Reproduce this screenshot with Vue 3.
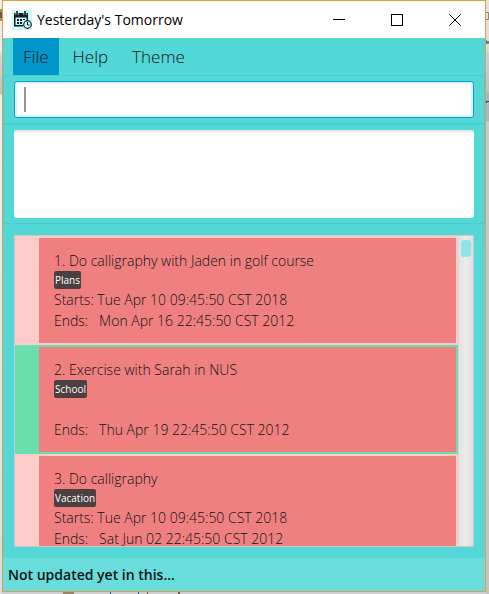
<script setup>
import { ref } from 'vue'

const command = ref('')
const result = ref('')
const menus = ['File', 'Help', 'Theme']
const activeMenu = ref('File')
const selected = ref(2)
const tasks = [
  { id: 1, name: 'Do calligraphy with Jaden in golf course', tag: 'Plans', start: 'Tue Apr 10 09:45:50 CST 2018', end: 'Mon Apr 16 22:45:50 CST 2012' },
  { id: 2, name: 'Exercise with Sarah in NUS', tag: 'School', start: '', end: 'Thu Apr 19 22:45:50 CST 2012' },
  { id: 3, name: 'Do calligraphy', tag: 'Vacation', start: 'Tue Apr 10 09:45:50 CST 2018', end: 'Sat Jun 02 22:45:50 CST 2012' },
]
</script>

<template>
  <div class="desktop">
    <svg class="behind left" viewBox="0 0 2 30" aria-hidden="true">
      <path d="M0 9h2v3H0zM0 18h2v3H0z" fill="#c08a4a" />
      <path d="M0 12h2v6H0z" fill="#6b5a56" />
    </svg>
    <svg class="behind right" viewBox="0 0 3 110" aria-hidden="true">
      <path d="M0 12.500h2.500v7H0" fill="none" stroke="#8a8484" />
      <path d="M0 40l1 4 1-3 1 3" fill="none" stroke="#5a6a90" />
      <path d="M0 101h3v1H1v1H0z" fill="#444" />
    </svg>
    <svg class="behind bottom" viewBox="0 0 200 2" aria-hidden="true">
      <path d="M63 0h11v2H63z" fill="#9c8266" />
      <path d="M110 0h1v2h-1zM138 0h1v2h-1z" fill="#1c5c94" />
      <path d="M147 0h1v2h-1zM178 0h2v2h-2z" fill="#7a5a3c" />
    </svg>

    <div class="window">
      <header class="titlebar">
        <svg class="logo" viewBox="0 0 20 20" aria-hidden="true">
          <rect width="20" height="20" fill="#c8fbfa" />
          <path d="M2 3h14v7h-1.500V7.500h-11V15H11v1.500H2z" fill="#151c1c" />
          <path d="M5 1v4M13 1v4" stroke="#c8fbfa" stroke-width="3" />
          <path d="M5 1v4M13 1v4" stroke="#151c1c" stroke-width="1.600" />
          <path d="M5 9h2v2H5zM8 9h2v2H8zM11 9h2v1h-2zM5 12h2v2H5zM8 12h2v2H8z" fill="#151c1c" />
          <circle cx="15.500" cy="14.500" r="4.800" fill="#c8fbfa" />
          <circle cx="15.500" cy="14.500" r="3.800" fill="none" stroke="#151c1c" stroke-width="1.200" />
          <path d="M15.500 12v3h2" fill="none" stroke="#151c1c" />
        </svg>
        <h1 class="title">Yesterday's Tomorrow</h1>
        <div class="controls">
          <button type="button" aria-label="Minimize">
            <svg viewBox="0 0 12 12"><path d="M0 5.500h12" /></svg>
          </button>
          <button type="button" aria-label="Maximize">
            <svg viewBox="0 0 12 12"><path d="M.5.5h11v11H.5z" /></svg>
          </button>
          <button type="button" aria-label="Close">
            <svg viewBox="0 0 12 12" class="smooth"><path d="M.3.3l11.400 11.400M11.700.3L.3 11.700" /></svg>
          </button>
        </div>
      </header>

      <nav class="menubar">
        <button
          v-for="menu in menus"
          :key="menu"
          type="button"
          class="menu"
          :class="{ active: menu === activeMenu }"
          @click="activeMenu = menu"
        >{{ menu }}</button>
      </nav>

      <div class="pane">
        <div class="command">
          <span class="caret"></span>
          <input v-model="command" type="text" aria-label="Command" />
        </div>
      </div>

      <div class="pane">
        <textarea v-model="result" class="result" aria-label="Result" readonly></textarea>
      </div>

      <main class="list-pane">
        <div class="list">
          <ul class="rows">
            <li
              v-for="task in tasks"
              :key="task.id"
              class="row"
              :class="{ selected: task.id === selected }"
              @click="selected = task.id"
            >
              <article class="card">
                <h2 class="name">{{ task.id }}. {{ task.name }}</h2>
                <span class="tag">{{ task.tag }}</span>
                <p class="date"><template v-if="task.start">Starts: {{ task.start }}</template></p>
                <p class="date">Ends:&nbsp;&nbsp; {{ task.end }}</p>
              </article>
            </li>
          </ul>
          <div class="track"><div class="thumb"></div></div>
        </div>
      </main>

      <footer class="status">Not updated yet in this...</footer>
    </div>
  </div>
</template>

<style>
body {
  margin: 0;
}
</style>

<style scoped>
.desktop {
  position: relative;
  box-sizing: border-box;
  height: 100vh;
  padding: 0 3px 2px 2px;
  background:
    linear-gradient(#ececec 0, #ececec 52px, #d8d8dc 53px, #bcbcc2 94px, #f0f0f0 95px, #dcdcdc 100%) left / 2px 100% no-repeat,
    linear-gradient(#e2e2e2 0, #dcdcdc 52px, #cfcfdb 53px, #bfbfcc 92px, #aab4c4 93px, #aab4c4 121px, #cacaca 122px, #c4c4c4 100%) right / 3px 100% no-repeat,
    #cfcfcf;
  font-family: "Open Sans", "Noto Sans", sans-serif;
  color: #0c1414;
}
.behind {
  position: absolute;
}
.left {
  top: 0;
  left: 0;
  width: 2px;
  height: 30px;
}
.right {
  top: 0;
  right: 0;
  width: 3px;
  height: 110px;
}
.bottom {
  bottom: 0;
  left: 0;
  width: 200px;
  height: 2px;
}
.window {
  box-sizing: border-box;
  height: 100%;
  display: flex;
  flex-direction: column;
  border: 1px solid #dda047;
  background: #54d7d7;
}
button,
input,
textarea {
  font: inherit;
  color: inherit;
  border: 0;
  margin: 0;
  padding: 0;
  background: none;
  outline: none;
}
.titlebar {
  display: flex;
  align-items: center;
  height: 37px;
  flex: none;
  padding-left: 9px;
  background: #fff;
}
.logo {
  width: 20px;
  height: 20px;
}
.title {
  flex: 1;
  margin: 0 0 0 5px;
  font-size: 14px;
  font-weight: 400;
  color: #000;
  white-space: nowrap;
}
.controls {
  display: flex;
  gap: 12px;
  padding-right: 7px;
}
.controls button {
  display: flex;
  align-items: center;
  justify-content: center;
  width: 46px;
  height: 36px;
}
.controls svg {
  width: 12px;
  height: 12px;
  fill: none;
  stroke: #000;
  shape-rendering: crispEdges;
}
.controls .smooth {
  shape-rendering: auto;
}
.menubar {
  display: flex;
  flex: none;
  gap: 4px;
  height: 37px;
  padding-left: 10px;
}
.menu {
  padding: 0 10px;
  font-size: 17px;
  font-weight: 300;
}
.menu.active {
  background: #0096c9;
}
.pane {
  flex: none;
  padding: 5px 10px;
  border: 1px solid #46cfcf;
}
.command {
  display: flex;
  align-items: center;
  box-sizing: border-box;
  height: 37px;
  padding-left: 9px;
  border: 1px solid #039ed3;
  border-radius: 3px;
  background: #fff;
  box-shadow: inset 0 0 0 2px #def1f9;
}
.caret {
  width: 2px;
  height: 25px;
  background: #969696;
}
.command input {
  flex: 1;
  min-width: 0;
  font-size: 17px;
}
.result {
  display: block;
  box-sizing: border-box;
  width: 100%;
  height: 88px;
  border-radius: 3px;
  background: #fff;
  box-shadow: inset 0 3px 3px -1px #e4e4e4;
  resize: none;
}
.list-pane {
  flex: 1;
  min-height: 0;
  display: flex;
  padding: 11px;
}
.list {
  flex: 1;
  min-width: 0;
  display: flex;
  border: 1px solid #c8c8c8;
  background: #ffcccc;
}
.rows {
  flex: 1;
  min-width: 0;
  margin: 0;
  padding: 0;
  list-style: none;
  overflow-y: auto;
  scrollbar-width: none;
}
.row {
  padding: 2px 2px 2px 24px;
  background: #ffcccc;
}
.row.selected {
  background: #6adfae;
}
.card {
  padding: 13px 15px 12px;
  background: #f08080;
}
.name,
.date {
  margin: 0;
  font-size: 14px;
  font-weight: 300;
  white-space: nowrap;
}
.name {
  height: 20px;
  line-height: 20px;
}
.date {
  height: 21px;
  line-height: 21px;
}
.tag {
  display: block;
  width: fit-content;
  padding: 0 1px;
  border-radius: 2px;
  background: #4b4041;
  color: #fff;
  font-size: 10px;
  line-height: 18px;
}
.track {
  width: 14px;
  padding-top: 4px;
  border-left: 1px solid #d8d8d8;
  background: linear-gradient(90deg, #e2e2e2, #ececec 50%, #dedede);
}
.thumb {
  width: 10px;
  height: 17px;
  margin: 0 auto;
  border-radius: 3px;
  background: #8fe5e5;
}
.status {
  flex: none;
  padding: 0 5px;
  background: #69dddb;
  font-size: 14px;
  font-weight: 600;
  line-height: 33px;
}
</style>
